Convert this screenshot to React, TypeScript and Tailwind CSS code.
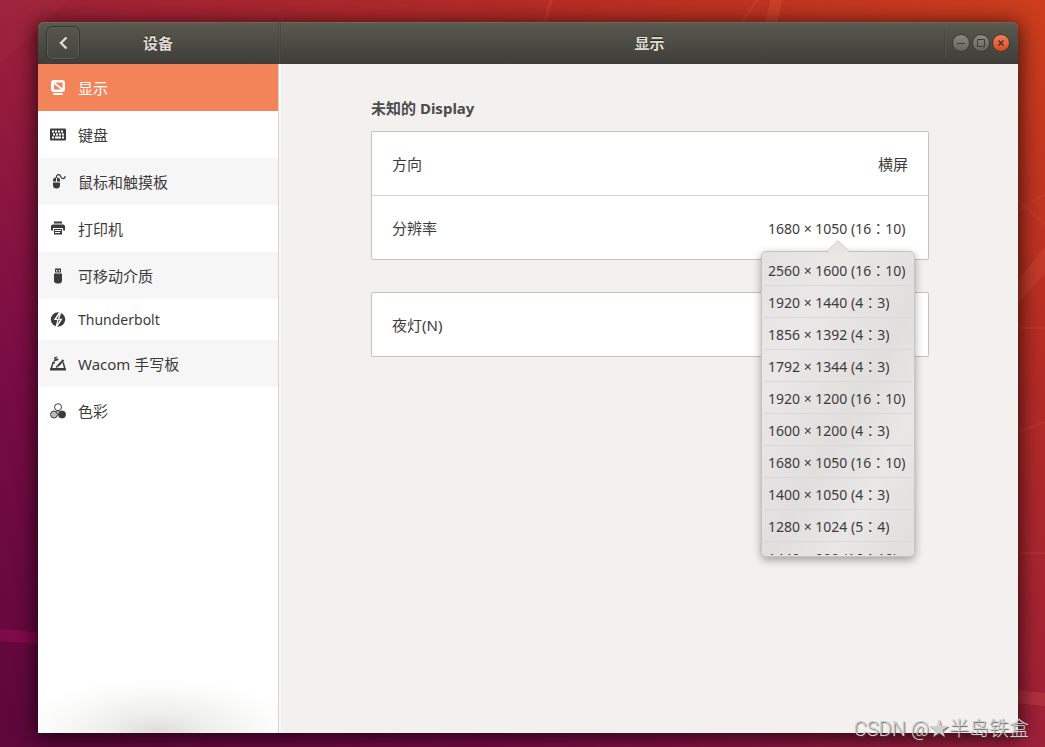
import type { ReactNode } from 'react'
import clsx from 'clsx'

const DisplayIcon = () => (
    <svg viewBox="0 0 16 16" className="size-4 shrink-0" fill="currentColor" aria-hidden="true">
        <path fillRule="evenodd" d="M4 0h8a3 3 0 0 1 3 3v6a3 3 0 0 1-3 3H4a3 3 0 0 1-3-3V3a3 3 0 0 1 3-3zM4 2.500v7h8.500v-7z" />
        <path stroke="currentColor" strokeWidth="1.800" d="M3.500 2.500l9 7" />
        <rect x="3" y="13" width="10" height="2" rx="1" />
    </svg>
)

const KeyboardIcon = () => (
    <svg viewBox="0 0 16 16" className="size-4 shrink-0" aria-hidden="true">
        <rect x="0" y="1.500" width="16" height="12" rx="1" fill="currentColor" />
        <path stroke="#fff" strokeWidth="2" strokeDasharray="2 1" d="M2 4.500h12" />
        <path stroke="#fff" strokeWidth="2" strokeDasharray="2 1" d="M3 7.500h11" />
        <path stroke="#fff" strokeWidth="2" d="M2 10.500h2M5 10.500h6M12 10.500h2" />
    </svg>
)

const MouseIcon = () => (
    <svg viewBox="0 0 16 16" className="size-4 shrink-0" fill="currentColor" aria-hidden="true">
        <path d="M6 3.500v4H3v-1a3 3 0 0 1 3-3zM7 3.500a3 3 0 0 1 3 3v1H7zM3 8.500h7v2.500a3.500 3.500 0 0 1-7 0z" />
        <path fill="none" stroke="currentColor" strokeWidth="1.200" d="M6.500 4C6 2 7.200.5 8.800.6c2.200.1 1.600 3.600 3.700 3.900 1.500.2 2.500-.8 2.700-2.300" />
    </svg>
)

const PrinterIcon = () => (
    <svg viewBox="0 0 16 16" className="size-4 shrink-0" fill="currentColor" aria-hidden="true">
        <path d="M4 .5h8v2H4zM3 3.500h10a2 2 0 0 1 2 2v4h-2V7H3v2.500H1v-4a2 2 0 0 1 2-2z" />
        <path fillRule="evenodd" d="M4 8h8v5.500H4zM5 9v1h6V9zM5 11v1h5v-1z" />
    </svg>
)

const UsbIcon = () => (
    <svg viewBox="0 0 16 16" className="size-4 shrink-0" fill="currentColor" aria-hidden="true">
        <path fillRule="evenodd" d="M5 .5h6v4H5zM6 2v1.500h1.300V2zM8.700 2v1.500H10V2z" />
        <path d="M4 5.500h8V12a3 3 0 0 1-3 3.500H7A3 3 0 0 1 4 12z" />
    </svg>
)

const ThunderboltIcon = () => (
    <svg viewBox="0 0 16 16" className="size-4 shrink-0" aria-hidden="true">
        <circle cx="8" cy="7.500" r="7.200" fill="currentColor" />
        <path fill="#fff" d="M9.400-.5L3.800 8h3.400L5.400 15.500l1.600-.2 5.600-8.600H9.400l1.900-6.400z" />
        <path fill="currentColor" d="M9.300 2.600L7.800 7H6.300zM7.200 12.200l1.400-4.400h1.500z" />
    </svg>
)

const TabletIcon = () => (
    <svg viewBox="0 0 16 16" className="size-4 shrink-0" fill="none" stroke="currentColor" aria-hidden="true">
        <path strokeWidth="1.500" d="M5 6.800H3L1.200 12.700h13.700L13.200 6.500" />
        <path strokeWidth="2" d="M0 13.500h16" />
        <path strokeWidth="2" d="M13.500 4L7.800 10" />
        <path fill="currentColor" stroke="none" d="M5.800 12l.8-2.700 1.900 1.700z" />
        <path strokeWidth="1.200" d="M7.500 1C5.500 1 4 2.200 4.800 3s3-.6 3.200.3S4.500 4 3.500 5.500" />
    </svg>
)

const ColorIcon = () => (
    <svg viewBox="0 0 16 16" className="size-4 shrink-0" stroke="currentColor" aria-hidden="true">
        <circle cx="4" cy="11.500" r="3.500" fill="#bbb" />
        <circle cx="12" cy="11.500" r="3.500" fill="currentColor" />
        <circle cx="8" cy="4.200" r="3.500" fill="#fff" />
        <path strokeWidth="1" d="M8 7.500l-2 2M8 7.500l2 2" />
    </svg>
)

const navigation = [
    { name: '显示', icon: <DisplayIcon />, href: '#display', current: true },
    { name: '键盘', icon: <KeyboardIcon />, href: '#keyboard' },
    { name: '鼠标和触摸板', icon: <MouseIcon />, href: '#mouse' },
    { name: '打印机', icon: <PrinterIcon />, href: '#printers' },
    { name: '可移动介质', icon: <UsbIcon />, href: '#media' },
    { name: 'Thunderbolt', icon: <ThunderboltIcon />, href: '#thunderbolt', short: true },
    { name: 'Wacom 手写板', icon: <TabletIcon />, href: '#wacom' },
    { name: '色彩', icon: <ColorIcon />, href: '#color' },
]

const resolutions = [
    '2560 × 1600 (16：10)',
    '1920 × 1440 (4：3)',
    '1856 × 1392 (4：3)',
    '1792 × 1344 (4：3)',
    '1920 × 1200 (16：10)',
    '1600 × 1200 (4：3)',
    '1680 × 1050 (16：10)',
    '1400 × 1050 (4：3)',
    '1280 × 1024 (5：4)',
    '1440 × 900 (16：10)',
]

function Wallpaper() {
    return (
        <svg viewBox="0 0 1045 747" preserveAspectRatio="none" className="absolute inset-0 size-full" aria-hidden="true">
            <path fill="#fff" fillOpacity=".02" d="M0 0h68L0 64z" />
            <path fill="#c0106a" fillOpacity=".3" d="M0 629l60 5v12L0 641z" />
            <g fill="#ff8060" fillOpacity=".16">
                <path d="M770 0h12l-6 30h-12z" />
                <path fillOpacity=".1" d="M755 0h4l-18 26h-4z" />
                <path fillOpacity=".12" d="M549 0h4l-8 26h-3z" />
                <path fillOpacity=".12" d="M1045 246v27l-32 36v-22z" />
                <path d="M1013 690l32 3v13l-32-3z" />
            </g>
            <g stroke="#ff8060" strokeOpacity=".1" strokeWidth="2">
                <path d="M1013 196l32 28M1013 214l32-20M1013 328h32M1013 434l32-12M1013 553h32" />
            </g>
        </svg>
    )
}

function WindowButton({ label, close, children }: { label: string; close?: boolean; children: ReactNode }) {
    return (
        <button
            type="button"
            aria-label={label}
            className={clsx(
                'size-[18px] rounded-full border border-[#3a3935] text-[#3c3b37]',
                close ? 'bg-linear-to-b from-[#f37f5c] to-[#dd4814]' : 'bg-linear-to-b from-[#8b8a82] to-[#65645d]'
            )}
        >
            <svg viewBox="0 0 16 16" className="size-4" fill="none" stroke="currentColor" aria-hidden="true">
                {children}
            </svg>
        </button>
    )
}

function TitleBar() {
    return (
        <header className="flex h-[42px] rounded-t-md bg-linear-to-b from-[#5b5a50] to-[#3e3d39] text-[#dfdbd2] shadow-[inset_0_1px_0_#6b6960] [text-shadow:0_-1px_0_#2b2a27]">
            <div className="grid w-60 shrink-0 grid-cols-[1fr_auto_1fr] items-center px-2">
                <button
                    type="button"
                    aria-label="返回"
                    className="flex size-[34px] items-center justify-center rounded-md border border-[#383733] bg-linear-to-b from-[#58574d] to-[#45443f] shadow-[inset_0_0_0_1px_#5e5c53]"
                >
                    <svg viewBox="0 0 16 16" className="size-4" fill="none" stroke="currentColor" strokeWidth="2.400" aria-hidden="true">
                        <path d="M11.500 2.500L6 8l5.500 5.500" />
                    </svg>
                </button>
                <h2 className="pt-px text-[15px] font-bold">设备</h2>
            </div>
            <div className="w-[3px] border-x border-x-[#403f3a] bg-[#5a594f] opacity-40" />
            <div className="grid flex-1 grid-cols-[1fr_auto_1fr] items-center">
                <h1 className="col-start-2 pt-px text-[15px] font-bold">显示</h1>
                <div className="flex items-center justify-end gap-[2px] pr-2">
                    <div className="mr-1 h-7 w-[2px] border-l border-l-[#403f3a] bg-[#5c5b52] opacity-60" />
                    <WindowButton label="最小化">
                        <path d="M4 8.500h8" />
                    </WindowButton>
                    <WindowButton label="最大化">
                        <path d="M4.500 4.500h7v7h-7z" />
                    </WindowButton>
                    <WindowButton label="关闭" close>
                        <path strokeWidth="1.500" d="M5.500 5.500l5 5M10.500 5.500l-5 5" />
                    </WindowButton>
                </div>
            </div>
        </header>
    )
}

function Sidebar() {
    return (
        <nav className="flex w-[241px] shrink-0 flex-col border-r border-[#d3d2cf] bg-white">
            {navigation.map((item) => (
                <a
                    key={item.name}
                    href={item.href}
                    aria-current={item.current ? 'page' : undefined}
                    className={clsx(
                        'flex items-center gap-3 pl-3',
                        item.short ? 'h-[41px] text-sm' : 'h-[47px]',
                        item.current ? 'bg-[#f38459] text-white' : 'text-[#3c3b3a] odd:bg-[#f6f6f6]'
                    )}
                >
                    {item.icon}
                    <span className={item.short ? '' : 'pt-px'}>{item.name}</span>
                </a>
            ))}
            {/* overshoot shade at the end of the list */}
            <div className="mt-auto h-14 bg-[radial-gradient(ellipse_60%_100%_at_50%_100%,#dddcda,#eeeeec_35%,#f9f9f8_70%,#fff)]" />
        </nav>
    )
}

function ResolutionPicker() {
    return (
        <div className="relative font-['Noto_Sans','Noto_Sans_CJK_TC',sans-serif]">
            <button type="button" id="resolution" aria-haspopup="listbox" aria-expanded="true" className="block w-[140px] pt-px text-left text-sm whitespace-nowrap">
                1680 × 1050 (16：10)
            </button>
            <div className="absolute top-[33px] left-1/2 z-10 w-[154px] -translate-x-1/2">
                <div className="h-[306px] overflow-hidden rounded-[5px] border border-[#c6c4c1] bg-[linear-gradient(120deg,#e3e2e1,#e9e8e7_25%,#e0dfde_55%,#e8e7e6_75%,#dfdedd)] p-[2px] pb-px shadow-[0_3px_8px_rgba(0,0,0,0.35)]">
                    <ul role="listbox" aria-labelledby="resolution" className="h-full overflow-x-hidden overflow-y-auto [scrollbar-width:none]">
                        {resolutions.map((mode) => (
                            <li key={mode} role="option" aria-selected={mode === '1680 × 1050 (16：10)'} className="flex h-8 items-center border-b border-[#d9d8d6] pt-[2px] pl-1 text-sm whitespace-nowrap">
                                {mode}
                            </li>
                        ))}
                    </ul>
                </div>
                <svg viewBox="0 0 22 12" className="absolute -top-[11px] left-[66px] h-3 w-[22px]" aria-hidden="true">
                    <path fill="#e6e5e4" d="M0 12L11 1l11 11z" />
                    <path fill="none" stroke="#c6c4c1" d="M0 11.500L11 .7l11 10.800" />
                </svg>
            </div>
        </div>
    )
}

export default function App() {
    return (
        <div className="relative flex min-h-screen bg-[linear-gradient(to_top_right,#5c073a,#780c45_25%,#9d2039_50%,#b42c25_75%,#cc3e1c)] pt-[22px] pr-[27px] pb-[14px] pl-[38px] font-['Noto_Sans','Noto_Sans_CJK_SC',sans-serif] text-[#3c3b3a]">
            <Wallpaper />
            <div className="relative flex flex-1 flex-col rounded-t-md shadow-[0_3px_20px_2px_rgba(0,0,0,0.7)]">
                <TitleBar />
                <div className="flex flex-1 bg-[#f2f1f0] text-[15px]">
                    <Sidebar />
                    <div className="w-[2px] bg-[#f8f8f7]" />
                    <main className="flex-1 pt-8 pr-[89px] pl-[90px]">
                        <h2 className="mb-[11px] leading-6 font-bold text-[#4c4b4a]">未知的 Display</h2>
                        <div className="mb-8 divide-y divide-[#d3d2cf] rounded-xs border border-[#c6c2bd] bg-white">
                            <div className="flex h-16 items-center justify-between px-5 pt-[2px]">
                                <label htmlFor="orientation">方向</label>
                                <select id="orientation" className="appearance-none text-right">
                                    <option>横屏</option>
                                </select>
                            </div>
                            <div className="flex h-[63px] items-center justify-between px-5 pt-[2px]">
                                <label htmlFor="resolution">分辨率</label>
                                <ResolutionPicker />
                            </div>
                        </div>
                        <button type="button" className="flex h-[65px] w-full items-center rounded-xs border border-[#c6c2bd] bg-white px-5 pt-[2px]">
                            夜灯(N)
                        </button>
                    </main>
                </div>
            </div>
            <p className="absolute right-4 bottom-1 font-['Roboto','Noto_Sans_CJK_SC',sans-serif] text-xl font-light text-[#d0d0d0] [text-shadow:1px_1px_1px_rgba(60,60,60,0.8)]">
                CSDN @★半岛铁盒
            </p>
        </div>
    )
}
